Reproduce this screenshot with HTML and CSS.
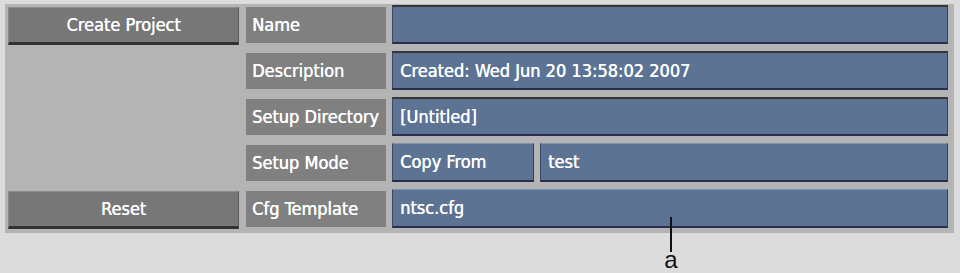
FILE: index.html
```html
<!DOCTYPE html>
<html lang="en">
<head>
    <meta charset="UTF-8">
    <title>Create Project</title>
    <link rel="stylesheet" href="styles.css">
</head>
<body>
    <div class="panel">
        <div class="button btn-create">Create Project</div>
        <div class="label row-1">Name</div>
        <div class="field entry row-1"></div>

        <div class="label row-2">Description</div>
        <div class="field entry row-2">Created: Wed Jun 20 13:58:02 2007</div>

        <div class="label row-3">Setup Directory</div>
        <div class="field entry row-3">[Untitled]</div>

        <div class="label row-4">Setup Mode</div>
        <div class="split row-4">
            <div class="field menu copy-from">Copy From</div>
            <div class="field menu grow">test</div>
        </div>

        <div class="button btn-reset">Reset</div>
        <div class="label row-5">Cfg Template</div>
        <div class="field menu row-5">ntsc.cfg</div>
    </div>

    <div class="callout">
        <div class="callout-line"></div>
        <div class="callout-text">a</div>
    </div>
</body>
</html>
```

FILE: styles.css
```css
* {
    box-sizing: border-box;
    margin: 0;
    padding: 0;
}

body {
    background-color: #dcdcdc;
    font-family: 'DejaVu Sans Condensed', 'DejaVu Sans', sans-serif;
    position: relative;
    width: 960px;
    height: 273px;
}

.panel {
    margin: 4px 0 0 5px;
    width: 949px;
    height: 229px;
    padding: 1px 6px 4px 3px;
    background-color: #b4b4b4;
    display: grid;
    grid-template-columns: 232px 140px 556px;
    grid-template-rows: repeat(5, 40px);
    column-gap: 6px;
    row-gap: 6px;
}

.row-1 { grid-row: 1; }
.row-2 { grid-row: 2; }
.row-3 { grid-row: 3; }
.row-4 { grid-row: 4; }
.row-5 { grid-row: 5; }

/* slightly heavier than the regular face, like the original UI font */
.button,
.label,
.field {
    color: #ffffff;
    font-size: 18px;
    text-shadow: 0.4px 0 0 #ffffff;
    white-space: nowrap;
}

.button {
    grid-column: 1;
    width: 231px;
    height: 38px;
    margin-top: 2px;
    background-color: #777777;
    border-top: 1px solid #8a8a8a;
    border-left: 1px solid #8a8a8a;
    border-right: 1px solid #5a5a5a;
    border-bottom: 3px solid #333333;
    line-height: 34px;
    text-align: center;
}

.btn-create { grid-row: 1; }
.btn-reset { grid-row: 5; }

.label {
    grid-column: 2;
    height: 36px;
    margin-top: 2px;
    padding-left: 6px;
    background-color: #808080;
    line-height: 36px;
}

.field {
    grid-column: 3;
    height: 39px;
    padding-left: 7px;
    background-color: #5c7394;
    border-left: 1px solid #3e4860;
    border-right: 1px solid #37405a;
    border-bottom: 2px solid #2b2d50;
    line-height: 36px;
}

.field.entry {
    border-top: 2px solid #363636;
    line-height: 35px;
}

.field.menu {
    border-top: 1px solid #8194ae;
}

.split {
    grid-column: 3;
    display: flex;
    gap: 6px;
}

.copy-from {
    width: 142px;
}

.grow {
    flex: 1;
}

.callout {
    position: absolute;
    left: 660px;
    top: 217px;
    width: 22px;
    display: flex;
    flex-direction: column;
    align-items: center;
}

.callout-line {
    width: 2px;
    height: 35px;
    background-color: #111111;
}

.callout-text {
    margin-top: -4px;
    font-family: 'Liberation Sans', Arial, sans-serif;
    font-size: 24px;
    line-height: 24px;
    color: #111111;
}
```
